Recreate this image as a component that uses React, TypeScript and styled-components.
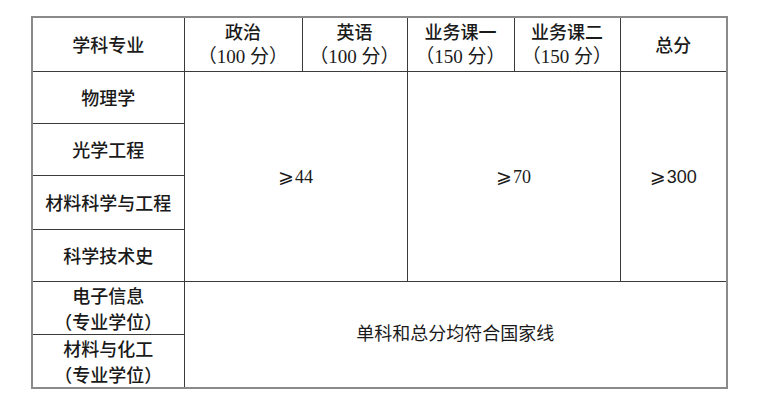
import { FC } from 'react';
import styled, { createGlobalStyle } from 'styled-components';

const GlobalStyle = createGlobalStyle`
  html, body {
    margin: 0;
    padding: 0;
    background: #ffffff;
  }
  body {
    font-family: "Noto Sans CJK SC", "Noto Sans", sans-serif;
    color: #1a1a1a;
  }
`;

const HEI = '"Noto Sans CJK SC", "Noto Sans", sans-serif';
const SONG = '"Liberation Serif", "Noto Sans CJK SC", serif';

interface Subject {
  name: string;
  full: string;
}

const subjects: Subject[] = [
  { name: '政治', full: '（100 分）' },
  { name: '英语', full: '（100 分）' },
  { name: '业务课一', full: '（150 分）' },
  { name: '业务课二', full: '（150 分）' },
];

const majors = ['物理学', '光学工程', '材料科学与工程', '科学技术史'];

const colWidths = [152, 118, 105, 107, 106, 107];

const App: FC = () => {
  return (
    <>
      <GlobalStyle />
      <Page>
        <ScoreTable>
          <colgroup>
            {colWidths.map((w, i) => (
              <col key={i} style={{ width: w }} />
            ))}
          </colgroup>
          <tbody>
            <Row height={54}>
              <HeadCell>学科专业</HeadCell>
              {subjects.map((s) => (
                <HeadCell key={s.name}>
                  <Line>{s.name}</Line>
                  <Full>{s.full}</Full>
                </HeadCell>
              ))}
              <HeadCell>总分</HeadCell>
            </Row>
            {majors.map((m, i) => (
              <Row key={m} height={i === 2 ? 54 : 52}>
                <HeadCell>{m}</HeadCell>
                {i === 0 && (
                  <>
                    <ValueCell rowSpan={4} colSpan={2}>
                      <Geq>⩾</Geq>44
                    </ValueCell>
                    <ValueCell rowSpan={4} colSpan={2}>
                      <Geq>⩾</Geq>70
                    </ValueCell>
                    <ValueCell rowSpan={4} sans>
                      <Geq>⩾</Geq>300
                    </ValueCell>
                  </>
                )}
              </Row>
            ))}
            <Row height={53}>
              <HeadCell>
                <Line>电子信息</Line>
                <Line>（专业学位）</Line>
              </HeadCell>
              <ValueCell rowSpan={2} colSpan={5}>
                单科和总分均符合国家线
              </ValueCell>
            </Row>
            <Row height={53}>
              <HeadCell>
                <Line>材料与化工</Line>
                <Line>（专业学位）</Line>
              </HeadCell>
            </Row>
          </tbody>
        </ScoreTable>
      </Page>
    </>
  );
};

const Page = styled.div`
  width: 780px;
  height: 407px;
  padding: 16px 0 0 31px;
  box-sizing: border-box;
`;

const ScoreTable = styled.table`
  border-collapse: collapse;
  table-layout: fixed;
  width: 696px;
  border: 2px solid #8a8a8a;
  text-spacing-trim: space-all;
`;

const Row = styled.tr<{ height: number }>`
  height: ${({ height }) => height}px;
`;

const HeadCell = styled.td`
  border: 1px solid #3a3a3a;
  padding: 0;
  text-align: center;
  vertical-align: middle;
  font-family: ${HEI};
  font-weight: 500;
  font-size: 18px;
  line-height: 26px;
  color: #1a1a1a;
`;

const Line = styled.div`
  white-space: nowrap;
  text-spacing-trim: space-all;
`;

const Full = styled.div`
  white-space: nowrap;
  text-spacing-trim: space-all;
  font-family: ${SONG};
  font-weight: 400;
  font-size: 19px;
`;

const ValueCell = styled.td<{ sans?: boolean }>`
  border: 1px solid #3a3a3a;
  padding: 0;
  text-align: center;
  vertical-align: middle;
  font-family: ${({ sans }) =>
    sans ? '"Liberation Sans", "Noto Sans CJK SC", sans-serif' : SONG};
  font-size: 18px;
  line-height: 26px;
  color: #1a1a1a;
`;

const Geq = styled.span`
  font-family: "DejaVu Sans", "Noto Sans CJK SC", sans-serif;
  font-size: 19px;
  margin-right: 1px;
`;

export default App;
